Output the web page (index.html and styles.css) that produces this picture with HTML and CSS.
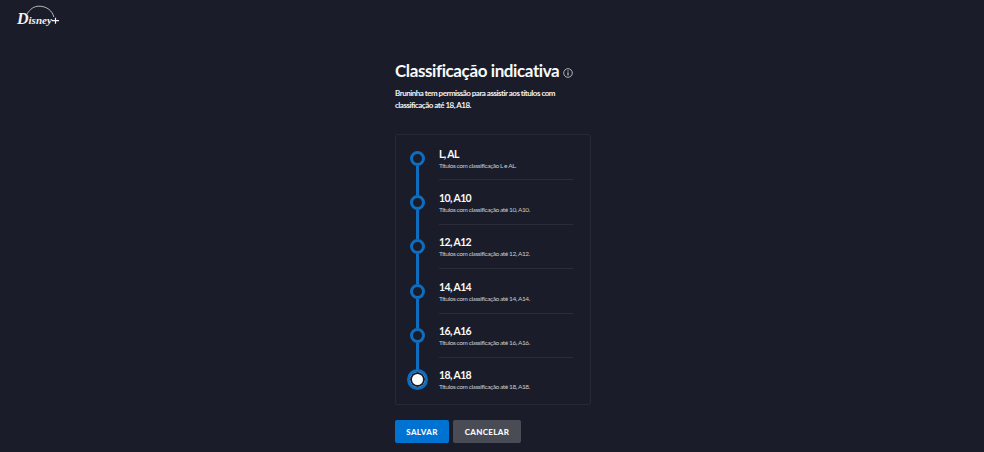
FILE: index.html
```html
<!DOCTYPE html>
<html lang="pt-BR">
<head>
    <meta charset="UTF-8">
    <title>Classificação indicativa</title>
    <link rel="stylesheet" href="styles.css">
</head>
<body>

<header class="top-bar">
    <svg class="logo" width="44" height="24" viewBox="0 0 44 24" aria-label="Disney+">
        <path d="M11 9C14 4 18 1.200 23 1.200C31 1.200 36.500 6 37.800 12" fill="none" stroke="#d9dadc" stroke-width="0.8"/>
        <text class="logo-word" x="1" y="19"><tspan class="logo-d">D</tspan>isney</text>
        <path d="M36 15.700h7M39.500 12.800v6" stroke="#f2f2f2" stroke-width="1.200" fill="none"/>
    </svg>
</header>

<main class="content">
    <h1 class="page-title">
        Classificação indicativa
        <svg class="info-icon" width="10" height="10" viewBox="0 0 10 10">
            <circle cx="5" cy="5" r="4.300" fill="none" stroke="#d8d9db" stroke-width="0.8"/>
            <path d="M5 4.400v3M5 2.500v1" stroke="#e8e9ea" stroke-width="1" fill="none"/>
        </svg>
    </h1>
    <p class="intro">Bruninha tem permissão para assistir aos títulos com classificação até 18, A18.</p>

    <div class="rating-box">
        <div class="rating-row">
            <div class="marker"><span class="dot"></span><span class="line"></span></div>
            <div class="rating-text">
                <h2>L, AL</h2>
                <p>Títulos com classificação L e AL.</p>
            </div>
        </div>
        <div class="rating-row">
            <div class="marker"><span class="dot"></span><span class="line"></span></div>
            <div class="rating-text">
                <h2>10, A10</h2>
                <p>Títulos com classificação até 10, A10.</p>
            </div>
        </div>
        <div class="rating-row">
            <div class="marker"><span class="dot"></span><span class="line"></span></div>
            <div class="rating-text">
                <h2>12, A12</h2>
                <p>Títulos com classificação até 12, A12.</p>
            </div>
        </div>
        <div class="rating-row">
            <div class="marker"><span class="dot"></span><span class="line"></span></div>
            <div class="rating-text">
                <h2>14, A14</h2>
                <p>Títulos com classificação até 14, A14.</p>
            </div>
        </div>
        <div class="rating-row">
            <div class="marker"><span class="dot"></span><span class="line"></span></div>
            <div class="rating-text">
                <h2>16, A16</h2>
                <p>Títulos com classificação até 16, A16.</p>
            </div>
        </div>
        <div class="rating-row selected">
            <div class="marker"><span class="dot"></span></div>
            <div class="rating-text">
                <h2>18, A18</h2>
                <p>Títulos com classificação até 18, A18.</p>
            </div>
        </div>
    </div>

    <div class="actions">
        <button class="btn btn-save">SALVAR</button>
        <button class="btn btn-cancel">CANCELAR</button>
    </div>
</main>

</body>
</html>
```

FILE: styles.css
```css
html, body {
    height: 100%;
}
body {
    margin: 0;
    background-color: #1a1d29;
    color: #f9f9f9;
    font-family: Lato, "Liberation Sans", sans-serif;
    overflow: hidden;
}
.top-bar {
    height: 61px;
    padding: 5px 0 0 16px;
    box-sizing: border-box;
}
.logo {
    display: block;
}
.logo-word {
    font-family: "Liberation Serif", serif;
    font-style: italic;
    font-weight: 700;
    font-size: 11px;
    fill: #f2f2f2;
}
.logo-d {
    font-size: 16px;
}
.content {
    width: 196px;
    margin-left: 395px;
}
.page-title {
    margin: 0;
    font-size: 17px;
    line-height: 20px;
    font-weight: 700;
    letter-spacing: -0.4px;
    white-space: nowrap;
}
.info-icon {
    vertical-align: -1px;
}
.intro {
    margin: 6px 0 0;
    width: 175px;
    font-size: 8px;
    line-height: 12px;
    font-weight: 700;
    letter-spacing: -0.5px;
    color: #f2f2f2;
}
.rating-box {
    margin-top: 23px;
    height: 271px;
    box-sizing: border-box;
    padding: 1px 17px 0 12px;
    border: 1px solid #272a36;
    border-radius: 2px;
}
.rating-row {
    display: flex;
    height: 44.4px;
}
.marker {
    width: 19px;
    margin-right: 12px;
    display: flex;
    flex-direction: column;
    align-items: center;
}
.dot {
    flex: none;
    width: 15px;
    height: 15px;
    box-sizing: border-box;
    margin-top: 14.5px;
    border: 3px solid #0f6dbf;
    border-radius: 50%;
}
.line {
    flex: 1;
    width: 3px;
    margin-bottom: -14.5px;
    background-color: #0f6dbf;
}
.selected .dot {
    width: 21px;
    height: 21px;
    margin-top: 11.5px;
    background-color: #fff;
    box-shadow: inset 0 0 0 2px #1a1d29;
}
.rating-text {
    flex: 1;
    box-sizing: border-box;
    padding-top: 11.5px;
    border-bottom: 1px solid #2a2d38;
}
.selected .rating-text {
    border-bottom: none;
}
.rating-text h2 {
    margin: 0;
    font-size: 10.5px;
    line-height: 12px;
    font-weight: 700;
    letter-spacing: -0.6px;
}
.rating-text p {
    margin: 0;
    font-size: 6.5px;
    line-height: 12px;
    letter-spacing: -0.4px;
    color: #cacbce;
}
.actions {
    display: flex;
    gap: 4px;
    margin-top: 15px;
}
.btn {
    height: 23px;
    padding: 0;
    border: none;
    border-radius: 2px;
    color: #f9f9f9;
    font-family: inherit;
    font-size: 8px;
    font-weight: 900;
    letter-spacing: 0.35px;
}
.btn-save {
    width: 54px;
    background-color: #0072d2;
}
.btn-cancel {
    width: 68px;
    background-color: #4a4c55;
}
```
